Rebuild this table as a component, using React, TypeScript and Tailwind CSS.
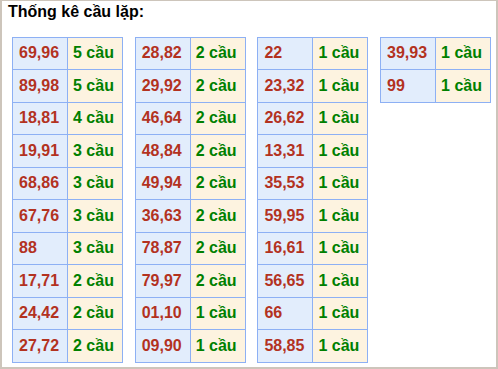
const COLUMNS: [string, number][][] = [
  [
    ["69,96", 5],
    ["89,98", 5],
    ["18,81", 4],
    ["19,91", 3],
    ["68,86", 3],
    ["67,76", 3],
    ["88", 3],
    ["17,71", 2],
    ["24,42", 2],
    ["27,72", 2],
  ],
  [
    ["28,82", 2],
    ["29,92", 2],
    ["46,64", 2],
    ["48,84", 2],
    ["49,94", 2],
    ["36,63", 2],
    ["78,87", 2],
    ["79,97", 2],
    ["01,10", 1],
    ["09,90", 1],
  ],
  [
    ["22", 1],
    ["23,32", 1],
    ["26,62", 1],
    ["13,31", 1],
    ["35,53", 1],
    ["59,95", 1],
    ["16,61", 1],
    ["56,65", 1],
    ["66", 1],
    ["58,85", 1],
  ],
  [
    ["39,93", 1],
    ["99", 1],
  ],
];

const LoopTable = ({ rows }: { rows: [string, number][] }) => (
  <div className="w-[111px] border-t border-l border-[#8db0f4]">
    {rows.map(([pair, count]) => (
      <div key={pair} className="flex h-[32.5px] border-b border-[#8db0f4]">
        <div className="w-[55px] flex items-center pl-[6px] bg-[#e2edfc] text-[#b3321f] border-r border-[#8db0f4]">
          {pair}
        </div>
        <div className="flex-1 flex items-center pl-[5px] bg-[#fdf3e0] text-[#008000] border-r border-[#8db0f4]">
          {count} cầu
        </div>
      </div>
    ))}
  </div>
);

export default function App() {
  return (
    <div
      className="w-[498px] h-[369px] bg-white border-l-2 border-r-2 border-b-2 border-t border-[#cdc5bb] overflow-hidden"
      style={{ fontFamily: '"Liberation Sans", Arial, sans-serif' }}
    >
      <div className="pl-[6px] pt-[1px] h-[20px] text-[16px] leading-[20px] font-bold text-black">
        Thống kê cầu lặp:
      </div>
      <div className="flex items-start gap-[11.7px] pl-[10px] pt-[15.5px] text-[16px] font-bold">
        {COLUMNS.map((rows, i) => (
          <LoopTable key={i} rows={rows} />
        ))}
      </div>
    </div>
  );
}
